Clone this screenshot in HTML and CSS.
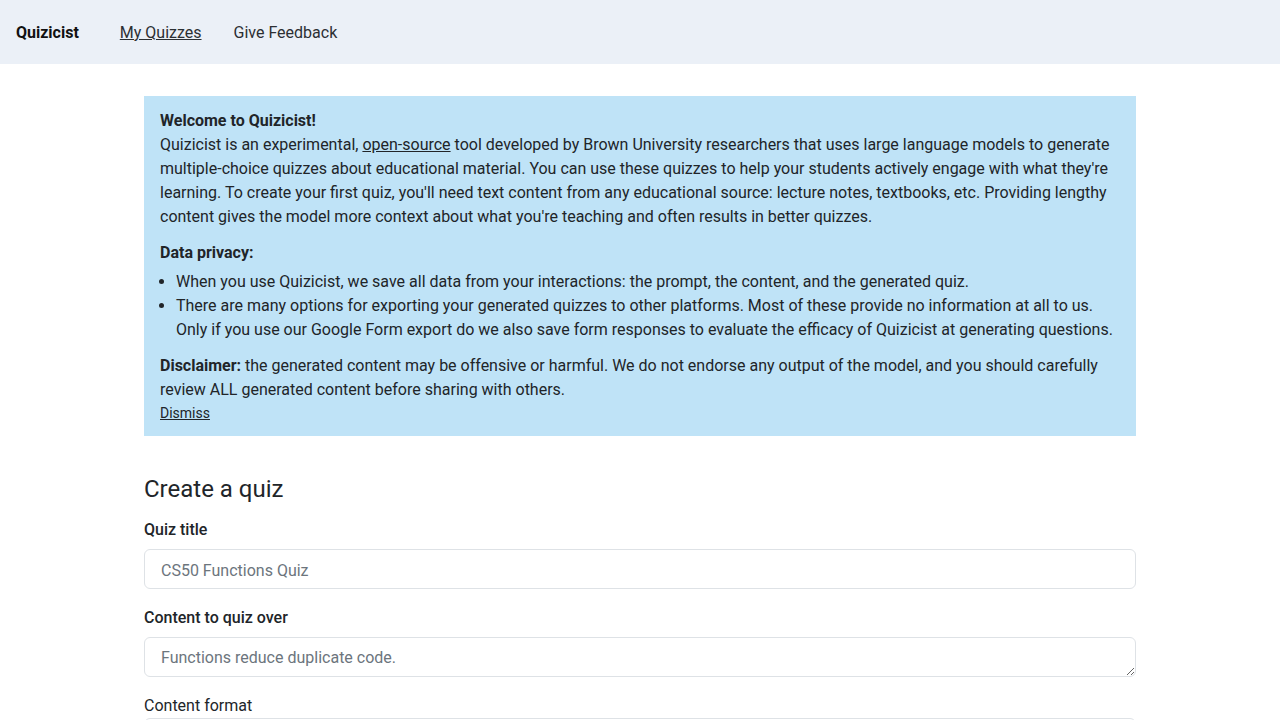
FILE: index.html
```html
<!DOCTYPE html>
<html lang="en">
<head>
<meta charset="utf-8">
<title>Quizicist</title>
<link rel="stylesheet" href="styles.css">
</head>
<body>
<nav class="navbar">
  <span class="brand">Quizicist</span>
  <a class="nav-link underlined" href="#">My Quizzes</a>
  <a class="nav-link" href="#">Give Feedback</a>
</nav>
<main class="container">
  <div class="alert">
    <strong class="block">Welcome to Quizicist!</strong>
    <p class="para">Quizicist is an experimental, <a class="link" href="#">open-source</a> tool developed by Brown University researchers that uses large language models to generate multiple-choice quizzes about educational material. You can use these quizzes to help your students actively engage with what they're learning. To create your first quiz, you'll need text content from any educational source: lecture notes, textbooks, etc. Providing lengthy content gives the model more context about what you're teaching and often results in better quizzes.</p>
    <strong class="block sub">Data privacy:</strong>
    <ul class="list">
      <li>When you use Quizicist, we save all data from your interactions: the prompt, the content, and the generated quiz.</li>
      <li>There are many options for exporting your generated quizzes to other platforms. Most of these provide no information at all to us. Only if you use our Google Form export do we also save form responses to evaluate the efficacy of Quizicist at generating questions.</li>
    </ul>
    <p class="para last"><b class="lead">Disclaimer:</b> the generated content may be offensive or harmful. We do not endorse any output of the model, and you should carefully review ALL generated content before sharing with others.</p>
    <a class="dismiss" href="#">Dismiss</a>
  </div>
  <h4 class="heading">Create a quiz</h4>
  <form class="form">
    <label class="label strong" for="title">Quiz title</label>
    <input class="control" id="title" type="text" placeholder="CS50 Functions Quiz">
    <label class="label strong" for="content">Content to quiz over</label>
    <textarea class="control area" id="content" rows="1" placeholder="Functions reduce duplicate code."></textarea>
    <label class="label plain" for="format">Content format</label>
    <select class="control" id="format"><option>Plain text</option></select>
  </form>
</main>
</body>
</html>
```
FILE: styles.css
```css
* { box-sizing: border-box; }
html, body { margin: 0; padding: 0; }
body {
  font-family: Roboto, "Liberation Sans", sans-serif;
  font-size: 16px;
  line-height: 24px;
  color: #212529;
  background: #fff;
}
.navbar {
  height: 64px;
  background: #ebf0f7;
  display: flex;
  align-items: center;
  padding: 2px 16px 0;
}
.brand {
  font-weight: 700;
  margin-right: 41px;
  color: #111;
}
.nav-link {
  color: #2b2f33;
  text-decoration: none;
  margin-right: 32px;
}
.nav-link.underlined { text-decoration: underline; }
.container {
  width: 992px;
  margin: 32px auto 0;
}
.alert {
  background: #bfe3f7;
  padding: 13px 16px 12px;
  margin-bottom: 39px;
}
.block { display: block; font-weight: 700; }
.para { margin: 0 0 12px; }
.para.last { margin-bottom: 0; }
.lead { font-weight: 700; }
.sub { margin-bottom: 5px; }
.link { color: inherit; text-decoration: underline; }
.list { margin: 0 0 12px; padding-left: 16px; }
.dismiss {
  display: block;
  margin-top: 1px;
  font-size: 14px;
  line-height: 21px;
  color: inherit;
  text-decoration: underline;
  width: max-content;
}
.heading {
  font-size: 24px;
  font-weight: 400;
  line-height: 29px;
  margin: 0 0 14px;
}
.form { display: flex; flex-direction: column; }
.label { display: block; margin-bottom: 7px; }
.label.strong { font-weight: 500; }
.label.plain { margin-bottom: 0; }
.control {
  display: block;
  width: 100%;
  height: 40px;
  border: 1px solid #dee2e6;
  border-radius: 6px;
  padding: 2px 16px 0;
  font-family: inherit;
  font-size: 16px;
  color: #212529;
  background: #fff;
  margin-bottom: 17px;
}
.control::placeholder { color: #6c757d; }
.area {
  padding: 8px 16px 6px;
  line-height: 24px;
  resize: vertical;
}
select.control { appearance: none; }
```
